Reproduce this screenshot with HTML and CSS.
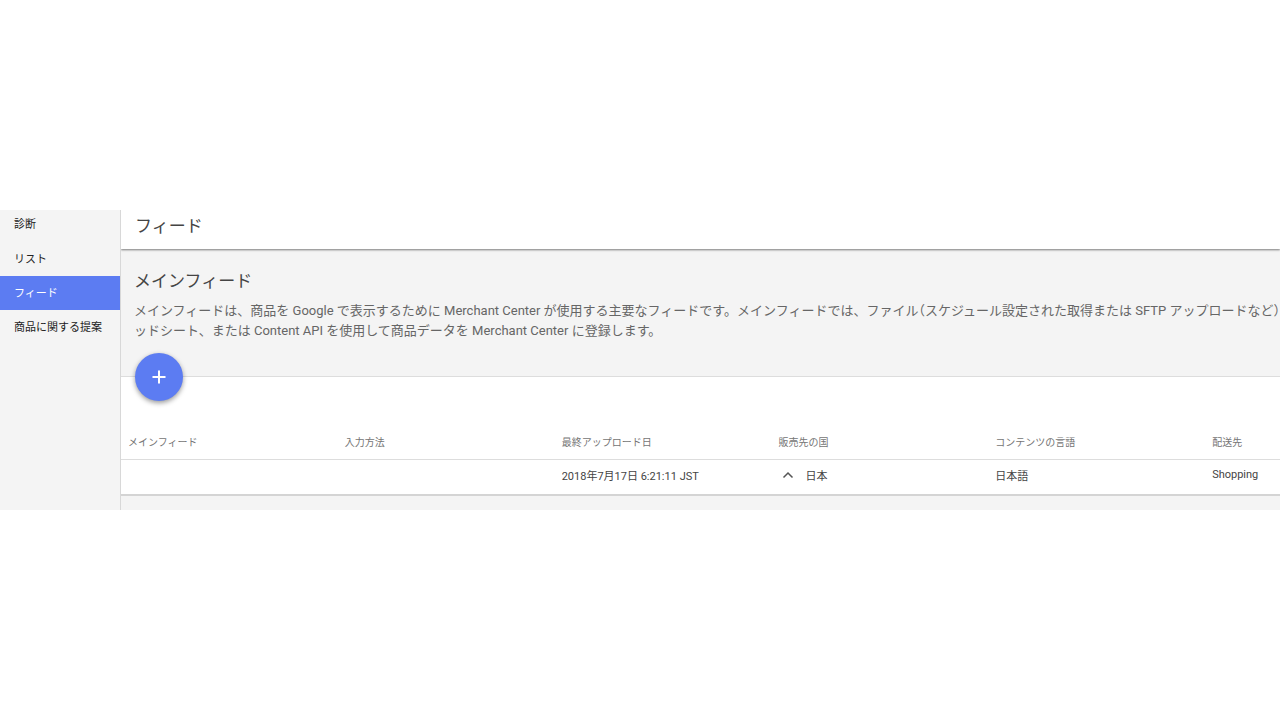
FILE: index.html
```html
<!DOCTYPE html>
<html lang="ja">
<head>
    <meta charset="UTF-8">
    <meta name="viewport" content="width=device-width, initial-scale=1.0">
    <title>フィード</title>
    <link rel="stylesheet" href="styles.css">
</head>
<body>
    <div class="app">
        <nav class="sidebar">
            <a href="#">診断</a>
            <a href="#">リスト</a>
            <a href="#" class="active">フィード</a>
            <a href="#">商品に関する提案</a>
        </nav>

        <main class="content">
            <header class="page-header">
                <h1>フィード</h1>
            </header>

            <section class="intro">
                <h2>メインフィード</h2>
                <p>
                    メインフィードは、商品を Google で表示するために Merchant Center が使用する主要なフィードです。メインフィードでは、ファイル<span class="paren">（</span>スケジュール設定された取得または SFTP アップロードなど<span class="paren">）</span><br>
                    ッドシート、または Content API を使用して商品データを Merchant Center に登録します。
                </p>
            </section>

            <section class="feeds">
                <button type="button" class="add-btn" aria-label="フィードを追加">
                    <svg width="14" height="14" viewBox="0 0 14 14">
                        <path d="M7 0.500v13M0.500 7h13" stroke="#fff" stroke-width="2" fill="none"/>
                    </svg>
                </button>
                <table>
                    <thead>
                        <tr>
                            <th>メインフィード</th>
                            <th>入力方法</th>
                            <th>最終アップロード日</th>
                            <th>販売先の国</th>
                            <th>コンテンツの言語</th>
                            <th>配送先</th>
                        </tr>
                    </thead>
                    <tbody>
                        <tr>
                            <td></td>
                            <td></td>
                            <td>2018年7月17日 6:21:11 JST</td>
                            <td>
                                <div class="country">
                                    <svg width="12" height="8" viewBox="0 0 12 8">
                                        <path d="M1.5 6.5L6 2l4.500 4.500" stroke="#555" stroke-width="1.500" fill="none"/>
                                    </svg>
                                    <span>日本</span>
                                </div>
                            </td>
                            <td>日本語</td>
                            <td>Shopping</td>
                        </tr>
                    </tbody>
                </table>
            </section>
        </main>
    </div>
</body>
</html>
```

FILE: styles.css
```css
* {
    box-sizing: border-box;
}
body {
    display: flex;
    align-items: center;
    min-height: 100vh;
    margin: 0;
    background-color: #fff;
    color: #444;
    font-family: Roboto, 'Noto Sans CJK JP', sans-serif;
    font-size: 11px;
}
.app {
    display: flex;
    width: 100%;
    overflow: hidden;
    background-color: #f4f4f4;
}

/* サイドバー */
.sidebar {
    flex: none;
    width: 121px;
    border-right: 1px solid #d8d8d8;
}
.sidebar a {
    display: block;
    height: 34px;
    padding-left: 14px;
    line-height: 36px;
    color: #222;
    text-decoration: none;
    white-space: nowrap;
}
.sidebar a:first-child {
    height: 32px;
    line-height: 30px;
}
.sidebar a.active {
    background-color: #5c7cf2;
    color: #fff;
}

/* メイン */
.content {
    flex: 1;
    min-width: 0;
    padding-bottom: 14px;
}
.page-header {
    height: 39px;
    padding-left: 14px;
    background-color: #fff;
    box-shadow: 0 1px 2px rgba(0,0,0,0.5);
    clip-path: inset(0 0 -4px 0);
}
h1, h2 {
    margin: 0;
    color: #444;
    font-size: 17px;
    font-weight: normal;
}
h1 {
    line-height: 32px;
}
.intro {
    height: 127px;
    padding: 20px 0 0 13px;
}
h2 {
    line-height: 24px;
}
.intro p {
    margin: 8px 0 0;
    color: #666;
    font-size: 13px;
    line-height: 20px;
    white-space: nowrap;
}
/* 括弧は半角幅で組む */
.paren {
    font-feature-settings: "halt";
}

/* フィード一覧 */
.feeds {
    position: relative;
    padding-top: 47px;
    background-color: #fff;
    border-top: 1px solid #ddd;
    border-bottom: 2px solid #d4d4d4;
}
.add-btn {
    position: absolute;
    top: -24px;
    left: 14px;
    display: flex;
    align-items: center;
    justify-content: center;
    width: 48px;
    height: 48px;
    padding: 0;
    border: none;
    border-radius: 50%;
    background-color: #5c7cf2;
    box-shadow: 0 2px 5px rgba(0,0,0,0.4);
    cursor: pointer;
}
table {
    width: 1301px;
    table-layout: fixed;
    border-collapse: collapse;
}
th, td {
    padding: 0 7px;
    text-align: left;
    white-space: nowrap;
}
th {
    height: 35px;
    border-bottom: 1px solid #ddd;
    color: #757575;
    font-size: 10px;
    font-weight: normal;
}
td {
    height: 35px;
    padding-bottom: 4px;
}
.country {
    display: flex;
    align-items: center;
    gap: 11px;
    padding-left: 4px;
}
```
